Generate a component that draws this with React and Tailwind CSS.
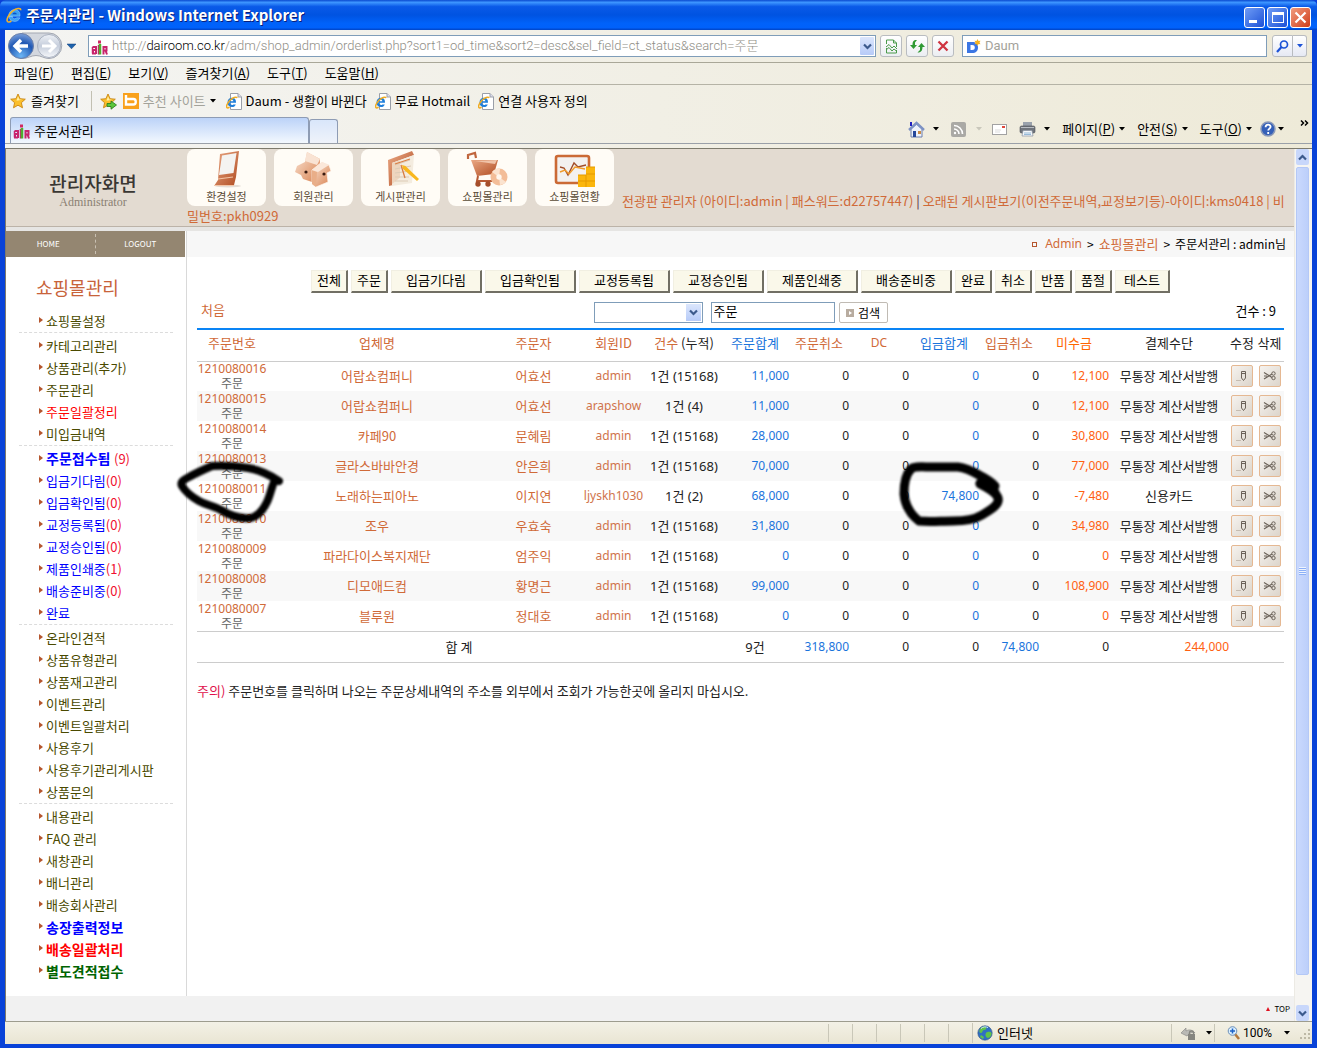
import React from "react";

const ORDERS = [
  ["1210080016", "어랍쇼컴퍼니", "어효선", "admin", "15168", "11,000", "0", "12,100"],
  ["1210080015", "어랍쇼컴퍼니", "어효선", "arapshow", "4", "11,000", "0", "12,100"],
  ["1210080014", "카페90", "문혜림", "admin", "15168", "28,000", "0", "30,800"],
  ["1210080013", "글라스바바안경", "안은희", "admin", "15168", "70,000", "0", "77,000"],
  ["1210080011", "노래하는피아노", "이지연", "ljyskh1030", "2", "68,000", "74,800", "-7,480", "신용카드"],
  ["1210080010", "조우", "우효숙", "admin", "15168", "31,800", "0", "34,980"],
  ["1210080009", "파라다이스복지재단", "엄주익", "admin", "15168", "0", "0", "0"],
  ["1210080008", "디모애드컴", "황명근", "admin", "15168", "99,000", "0", "108,900"],
  ["1210080007", "블루원", "정대호", "admin", "15168", "0", "0", "0"],
];

const MENU = [
  [["쇼핑몰설정"]],
  [["카테고리관리"], ["상품관리(추가)"], ["주문관리"], ["주문일괄정리", "text-[13px] text-[#f00]"], ["미입금내역"]],
  [
    ["주문접수됨", "text-[14px] text-[#00f] font-bold", "(9)"],
    ["입금기다림", "text-[13px] text-[#00f]", "(0)"],
    ["입금확인됨", "text-[13px] text-[#00f]", "(0)"],
    ["교정등록됨", "text-[13px] text-[#00f]", "(0)"],
    ["교정승인됨", "text-[13px] text-[#00f]", "(0)"],
    ["제품인쇄중", "text-[13px] text-[#00f]", "(1)"],
    ["배송준비중", "text-[13px] text-[#00f]", "(0)"],
    ["완료", "text-[13px] text-[#00f]"],
  ],
  [["온라인견적"], ["상품유형관리"], ["상품재고관리"], ["이벤트관리"], ["이벤트일괄처리"], ["사용후기"], ["사용후기관리게시판"], ["상품문의"]],
  [
    ["내용관리"],
    ["FAQ 관리"],
    ["새창관리"],
    ["배너관리"],
    ["배송회사관리"],
    ["송장출력정보", "text-[14px] text-[#00f] font-bold"],
    ["배송일괄처리", "text-[14px] text-[#f00] font-bold"],
    ["별도견적접수", "text-[14px] text-[#006400] font-bold"],
  ],
];

const STATUS_BUTTONS = [
  ["전체", "w-[37px]"],
  ["주문", "w-[37px]"],
  ["입금기다림", "w-[91px]"],
  ["입금확인됨", "w-[91px]"],
  ["교정등록됨", "w-[91px]"],
  ["교정승인됨", "w-[91px]"],
  ["제품인쇄중", "w-[91px]"],
  ["배송준비중", "w-[91px]"],
  ["완료", "w-[37px]"],
  ["취소", "w-[37px]"],
  ["반품", "w-[37px]"],
  ["품절", "w-[37px]"],
  ["테스트", "w-[55px]"],
];

const LATIN = "font-['Noto_Sans','Noto_Sans_CJK_KR',sans-serif]";
const NUM = "font-['Noto_Sans','Noto_Sans_CJK_KR',sans-serif] text-[12px]";

/* ---------- icons ---------- */

function IeLogo({ size = 16 }) {
  return (
    <svg width={size} height={size} viewBox="0 0 16 16" aria-hidden="true">
      <path d="M3.200 9.200h10.800c.5-4-2-6.600-5.400-6.600S2.800 5.200 2.800 8.500s2.400 5.900 5.800 5.900c2.600 0 4.500-1.200 5.300-3.600H10.500c-.4.700-1 1-1.900 1-1.300 0-2.200-.9-2.300-2.600z" fill="#3ba0f2" stroke="#bfe2ff" strokeWidth=".4" />
      <path d="M6.400 7.300h4.400c-.2-1.200-1-1.900-2.200-1.900s-2 .7-2.200 1.900z" fill="#0a52c8" />
      <path d="M14.800 3.200C14.600.6 10.500 1 6.500 4.200 2.500 7.500.2 12.500 1.400 14.400c.7 1.100 2.500.6 4-.4" fill="none" stroke="#f2b22c" strokeWidth="1.600" />
    </svg>
  );
}

function PageIe() {
  return (
    <svg width="16" height="17" viewBox="0 0 16 17" aria-hidden="true">
      <path d="M4.500.5h7.500l3.500 3.500v12.500h-11z" fill="#fff" stroke="#9a9fa8" />
      <path d="M12 .5V4h3.500" fill="#dde" stroke="#9a9fa8" />
      <path d="M2 9.800h8c.3-3.200-1.300-5.100-4-5.100S1.500 6.600 1.500 9.400 3.300 14 6 14c1.900 0 3.200-.9 3.800-2.600H7.300c-.3.500-.7.600-1.200.6-1 0-1.600-.7-1.700-1.700zM4.400 8.300c.1-.9.700-1.500 1.500-1.500s1.400.6 1.500 1.500z" fill="#1e7edb" fillRule="evenodd" />
      <path d="M11.200 5C10.200 3.200 6.500 4.700 4 7.300S-.3 13.500 1 14.700c.6.500 1.700 0 2.500-.6" fill="none" stroke="#f0ac22" strokeWidth="1.500" />
    </svg>
  );
}

function AirLogo() {
  return (
    <svg width="17" height="17" viewBox="0 0 17 17" fill="none" aria-hidden="true">
      <path d="M1.500 9h3.500v7M5 15.500H2v-3.500h3" stroke="#c8246c" strokeWidth="2" />
      <path d="M1.500 9v6.500" stroke="#c8246c" strokeWidth="1.500" />
      <path d="M7.500 7v9.500" stroke="#c8246c" strokeWidth="1.500" />
      <path d="M9 6v10.500" stroke="#4fae2f" strokeWidth="2.500" />
      <rect x="7" y="2.500" width="3" height="3" fill="#d02a62" />
      <path d="M12.500 16.500V9H15.500v3.500h-3M14.500 12.500l1.500 4" stroke="#c8246c" strokeWidth="2" />
    </svg>
  );
}

function Star({ add }) {
  return (
    <svg width="17" height="17" viewBox="0 0 17 17" aria-hidden="true">
      <path d="M8 1l2.100 4.700 5.200.5-3.900 3.500 1.100 5.100L8 12.200l-4.500 2.600 1.100-5.100L.7 6.200l5.200-.5z" fill="#fbbf2b" stroke="#c98612" strokeWidth=".9" />
      <path d="M8 3.200l1.300 3.200 3 .3-5.800 1z" fill="#fff0a8" />
      {add && <path d="M7 10.500h4V8l5.500 4L11 16.200v-2.700H7z" fill="#5bc63b" stroke="#237a1a" strokeWidth=".8" />}
    </svg>
  );
}

function Caret({ cls = "text-black" }) {
  return (
    <svg width="6" height="4" viewBox="0 0 6 4" className={`shrink-0 ${cls}`} aria-hidden="true">
      <path d="M0 0h6L3 3.500z" fill="currentColor" />
    </svg>
  );
}

function Chevron({ up }) {
  return (
    <svg width="9" height="7" viewBox="0 0 9 7" aria-hidden="true">
      <path d={up ? "M1 5.500l3.500-3.500L8 5.500" : "M1 1.500L4.500 5 8 1.500"} fill="none" stroke="#3c5a8c" strokeWidth="2.200" />
    </svg>
  );
}

function MenuIcon({ kind }) {
  return (
    <svg width="44" height="37" viewBox="0 0 44 37" aria-hidden="true">
      <defs>
        <linearGradient id="copper" x1="0" y1="0" x2="1" y2="1">
          <stop offset="0" stopColor="#eaa884" />
          <stop offset="1" stopColor="#b04c22" />
        </linearGradient>
        <linearGradient id="skin" x1="0" y1="0" x2="1" y2="1">
          <stop offset="0" stopColor="#fbe6d6" />
          <stop offset="1" stopColor="#d8814f" />
        </linearGradient>
      </defs>
      {kind === "monitor" && (
        <g>
          <ellipse cx="23" cy="35" rx="13" ry="1.500" fill="#e4ddd6" />
          <path d="M15 3L34 0l-3 26-2 8-20 1 4-6z" fill="url(#copper)" />
          <path d="M17 4.500L31.500 2l-3 20L14 24z" fill="#f4f3f1" />
          <path d="M13 28l15-2M9 34.500h20" stroke="#f3c6a8" strokeWidth="1.200" />
        </g>
      )}
      {kind === "people" && (
        <g>
          <path d="M15 1l13 7v11h-8v12l-9-3-2-4-6-3 2-6 8-4z" fill="url(#skin)" />
          <path d="M15 1l13 7-3 6-12-4z" fill="#f9e3d3" />
          <path d="M20 19l10-8 7 3 2 6-4 2 1 9-12 5-4-3z" fill="url(#skin)" stroke="#fff8f0" strokeWidth=".7" />
          <path d="M20 19l5 2-1 15-4-3z" fill="#e9ae88" />
          <path d="M20 19l10-8 7 3-11 7z" fill="#fbe8da" />
          <circle cx="14" cy="21" r="1.600" fill="#3a1b10" />
          <circle cx="32" cy="23" r="1.600" fill="#3a1b10" />
        </g>
      )}
      {kind === "board" && (
        <g>
          <path d="M9 9L33 0l2 4-22 8 1 22-4 1z" fill="url(#copper)" />
          <path d="M13 12l22-8-2 28-20 3z" fill="#f4ecdf" />
          <path d="M13 12l8-2.500v17L13 33z" fill="#e9c7a8" opacity=".6" />
          <path d="M16 14l15-5M16 18l16-3M16 22l15-2M16 26h14M16 30h13" stroke="#dccbb6" />
          <path d="M16 13l15-5M22 14l4 13" stroke="#d97d43" strokeWidth="1.300" />
          <path d="M23 14l3.500 1L40 28l-2 2-14-12z" fill="#f8b71e" />
        </g>
      )}
      {kind === "cart" && (
        <g>
          <path d="M2 8V4l7-2 1 5" fill="none" stroke="#c0653c" strokeWidth="2.200" />
          <path d="M5 9h27l-4 14-17 2z" fill="url(#copper)" />
          <path d="M9 10l22-1-2 4z" fill="#f0c3a8" />
          <path d="M12 25l-1 5h15" fill="none" stroke="#b75a34" strokeWidth="2" />
          <circle cx="12" cy="33" r="2.700" fill="#a54e2b" />
          <circle cx="22" cy="33" r="2.700" fill="#a54e2b" />
          <circle cx="33" cy="26" r="8.500" fill="#f3bd98" />
          <path d="M33 26l-7-5a8.500 8.500 0 0 1 8-3z" fill="#fbe3cf" />
          <path d="M33 26l7 5a8.500 8.500 0 0 1-6 3z" fill="#fbe3cf" />
          <circle cx="33" cy="26" r="2.700" fill="#fff7ee" />
        </g>
      )}
      {kind === "chart" && (
        <g>
          <rect x="3" y="5" width="33" height="27" rx="2" fill="#f3f1ef" stroke="#cb6a35" strokeWidth="2.600" />
          <path d="M7 16l4 1 4 7 6-12 4 4 8-2" fill="none" stroke="#a04c28" strokeWidth="1.400" />
          <path d="M7 21l5-2 4 4 6-7 10 2" fill="none" stroke="#f09a2a" strokeWidth="1.400" />
          <path d="M25 24h8v-8h9v20H25z" fill="#fbb60d" />
          <path d="M25 24h8M33 16h9M25 30h17M33 23h9M33 24v12" stroke="#e59a00" />
        </g>
      )}
    </svg>
  );
}

function HomeIcon() {
  return (
    <svg width="17" height="17" viewBox="0 0 17 17" aria-hidden="true">
      <path d="M3 8l5.500-5L14 8v8H3z" fill="#eef2fa" stroke="#6a7fae" />
      <path d="M1 9l7.500-7L16 9" fill="none" stroke="#7d92c4" strokeWidth="2.400" />
      <path d="M3 1v4" stroke="#2020c0" strokeWidth="2" />
      <path d="M5 10h3v6H5z" fill="#26489a" />
      <path d="M10 10h3v3h-3z" fill="#c98b45" />
    </svg>
  );
}

function PrinterIcon() {
  return (
    <svg width="17" height="16" viewBox="0 0 17 16" aria-hidden="true">
      <path d="M4 1h9v4H4z" fill="#9aa2ac" />
      <rect x="1" y="5" width="15" height="7" rx="1.500" fill="#70757c" stroke="#4b4f55" strokeWidth=".6" />
      <path d="M2 6.500h13" stroke="#b9bdc3" />
      <path d="M4 9.500h9l1 5.500H3z" fill="#f4f7fa" stroke="#8690a0" strokeWidth=".7" />
      <path d="M5 12h7M5 13.500h7" stroke="#7fa9cf" strokeWidth=".8" />
    </svg>
  );
}

function Globe() {
  return (
    <svg width="16" height="16" viewBox="0 0 16 16" aria-hidden="true">
      <circle cx="8" cy="8" r="7.200" fill="#2f6fc4" stroke="#31507c" strokeWidth=".6" />
      <path d="M3 4c2-3 5-3 6-2s0 3-2 3-1 3-3 3-2-2-1-4zM9 8c2-2 5-1 5.500 0s-1 5-3.500 5-3-4-2-5zM4 10l3 2-1 2-3-2z" fill="#5fc34a" />
      <path d="M4 3.500C6 1.500 9 1.500 11 2.500" stroke="#d7ecff" fill="none" />
    </svg>
  );
}

/* ---------- browser frame ---------- */

function TitleBar() {
  return (
    <header className="flex h-[30px] shrink-0 items-center rounded-t-md bg-[linear-gradient(180deg,#0a4ad0_0,#3d95ff_8%,#0a5ae8_22%,#0053e1_50%,#0062fa_78%,#0061fb_92%,#0043c4_100%)] pr-[6px] pl-[6px]">
      <IeLogo />
      <h1 className="ml-1 flex-1 text-[15px] font-bold text-white [text-shadow:1px_1px_0_#0a1f7a]">
        주문서관리 - Windows Internet Explorer
      </h1>
      <div className="mt-1 flex gap-[2px]">
        <button aria-label="최소화" className="flex size-[21px] items-end rounded-[3px] border border-white bg-linear-to-br from-[#6f9bf5] to-[#1d4fd6] p-1">
          <span className="h-[3px] w-[8px] bg-white" />
        </button>
        <button aria-label="최대화" className="flex size-[21px] items-center justify-center rounded-[3px] border border-white bg-linear-to-br from-[#6f9bf5] to-[#1d4fd6]">
          <span className="h-[11px] w-[12px] border border-t-[3px] border-white" />
        </button>
        <button aria-label="닫기" className="flex size-[21px] items-center justify-center rounded-[3px] border border-white bg-linear-to-br from-[#f09a7c] to-[#cf3a12]">
          <svg width="13" height="13" viewBox="0 0 13 13" aria-hidden="true">
            <path d="M1.500 1.500l10 10M11.500 1.500l-10 10" stroke="#fff" strokeWidth="2.200" />
          </svg>
        </button>
      </div>
    </header>
  );
}

function SquareButton({ label, children }) {
  return (
    <button aria-label={label} className="flex size-[22px] items-center justify-center rounded-[3px] border border-[#b9bcc0] bg-linear-to-b from-white to-[#eceef2]">
      {children}
    </button>
  );
}

function AddressBar() {
  return (
    <div className="flex h-[33px] shrink-0 items-center border-b border-[#a9a798] bg-linear-to-r from-[#f4f4f2] to-[#eeead8] pr-[5px] pl-[2px]">
      <svg width="56" height="28" viewBox="0 0 56 28" role="img" aria-label="뒤로 앞으로">
        <defs>
          <radialGradient id="back" cx=".5" cy=".9" r=".9">
            <stop offset="0" stopColor="#6cb5f4" />
            <stop offset=".6" stopColor="#2058b4" />
            <stop offset="1" stopColor="#7aa0dc" />
          </radialGradient>
          <linearGradient id="fwd" x1="0" y1="0" x2="0" y2="1">
            <stop offset="0" stopColor="#eef1f6" />
            <stop offset=".5" stopColor="#c5cddb" />
            <stop offset="1" stopColor="#f6f8fb" />
          </linearGradient>
        </defs>
        <path d="M15 1h27a12.500 12.500 0 0 1 0 25.500c-5 0-8-3-13-3s-8 3-14 3z" fill="#d3d7de" stroke="#a3a8b2" />
        <circle cx="14" cy="14" r="12.500" fill="url(#back)" stroke="#6a7ea8" />
        <circle cx="42" cy="14" r="11.500" fill="url(#fwd)" stroke="#a9b1c0" />
        <path d="M14 8l-6 6 6 6M8 14h13" fill="none" stroke="#fff" strokeWidth="3.400" />
        <path d="M42 8l6 6-6 6M48 14H35" fill="none" stroke="#fff" strokeWidth="3" />
      </svg>
      <button aria-label="최근 페이지" className="mr-2 ml-1">
        <svg width="9" height="6" viewBox="0 0 9 6" aria-hidden="true">
          <path d="M0 1h9L4.500 5.800z" fill="#1d63ad" stroke="#123f78" strokeWidth=".5" />
        </svg>
      </button>
      <div className="ml-1 flex h-[22px] min-w-0 flex-1 items-center border border-[#7f9db9] bg-white pl-[2px]">
        <AirLogo />
        <a href="#address" className="ml-1 min-w-0 flex-1 truncate font-[Roboto,'Noto_Sans_CJK_KR',sans-serif] text-[13px] leading-5 font-light text-[#8f8e86]">
          http://<span className="text-black">dairoom.co.kr</span>/adm/shop_admin/orderlist.php?sort1=od_time&amp;sort2=desc&amp;sel_field=ct_status&amp;search=주문
        </a>
        <button aria-label="주소 목록" className="mr-px flex h-[18px] w-[14px] items-center justify-center rounded-[1px] bg-linear-to-b from-[#dbe6fc] to-[#b7cbf8]">
          <Chevron />
        </button>
      </div>
      <div className="ml-1 flex gap-1">
        <SquareButton label="호환성 보기">
          <svg width="13" height="15" viewBox="0 0 13 15" fill="none" stroke="#4a9a4a" aria-hidden="true">
            <path d="M1.500 5V1h7l3 3v4M8.500 1v3h3M1.500 9v5h10v-3M1 8l3-2.500L7 9l2-2 3 3M1 11l3-2.500 3 3.500 2-2 3 2.500" />
          </svg>
        </SquareButton>
        <SquareButton label="새로 고침">
          <svg width="15" height="14" viewBox="0 0 15 14" aria-hidden="true">
            <path d="M0 6l3.500 4L7 6H5V3.500L7 1H5C3 2 2.500 3 2.500 6z" fill="#2f9a34" />
            <path d="M8 8l3.500-4L15 8h-2.500c0 3-1 5-3.500 5.500H7.500L10 11V8z" fill="#2f9a34" />
          </svg>
        </SquareButton>
        <SquareButton label="중지">
          <svg width="12" height="12" viewBox="0 0 12 12" aria-hidden="true">
            <path d="M1.500 1.500l9 9M10.500 1.500l-9 9" stroke="#cf3340" strokeWidth="2.300" />
          </svg>
        </SquareButton>
      </div>
      <label className="ml-2 flex h-[22px] w-[305px] items-center border border-[#7f9db9] bg-white pl-[3px]">
        <svg width="15" height="15" viewBox="0 0 15 15" aria-hidden="true">
          <path d="M1 3h5c4 0 6 2 6 5.500S10 14 6 14H1zm3.500 3v5H6c2 0 2.800-.8 2.800-2.500S8 6 6 6z" fill="#3b76e4" fillRule="evenodd" />
          <path d="M11.500 0l1 2 2-.3-1 1.800 1 1.800-2-.3-1 2-1-2-2 .3 1-1.800-1-1.800 2 .3z" fill="#f6b321" />
        </svg>
        <input aria-label="검색" placeholder="Daum" className="ml-1 min-w-0 flex-1 font-[Roboto,'Noto_Sans_CJK_KR',sans-serif] text-[13px] outline-none placeholder:text-[#a3a29a]" />
      </label>
      <div className="ml-[5px] flex">
        <button aria-label="검색 실행" className="flex h-[22px] w-[21px] items-center justify-center rounded-l-[3px] border border-[#b9bcc0] bg-linear-to-b from-white to-[#e6e9f4]">
          <svg width="13" height="13" viewBox="0 0 13 13" fill="none" stroke="#1c52d6" aria-hidden="true">
            <circle cx="8" cy="4.500" r="3.500" strokeWidth="1.700" />
            <path d="M5.500 7L1 12" strokeWidth="2.200" />
          </svg>
        </button>
        <button aria-label="검색 공급자" className="flex h-[22px] w-[14px] items-center justify-center rounded-r-[3px] border border-l-0 border-[#b9bcc0] bg-linear-to-b from-white to-[#e6e9f4]">
          <Caret cls="text-[#1c52d6]" />
        </button>
      </div>
    </div>
  );
}

function MenuBar() {
  const items = [["파일", "F"], ["편집", "E"], ["보기", "V"], ["즐겨찾기", "A"], ["도구", "T"], ["도움말", "H"]];
  return (
    <nav className="flex h-[22px] shrink-0 items-center gap-[17px] border-b border-[#b5b3a6] bg-linear-to-r from-[#f4f4f2] to-[#eeead8] pb-[2px] pl-[9px]">
      {items.map(([t, k]) => (
        <button key={k} className="text-[13px] leading-5">
          {t}(<u>{k}</u>)
        </button>
      ))}
    </nav>
  );
}

function Favorites() {
  return (
    <div className="flex h-8 shrink-0 items-center pl-[5px] text-[13px] leading-5">
      <button className="flex items-center gap-1"><Star />즐겨찾기</button>
      <span className="mr-2 ml-3 h-5 w-px bg-[#c2c0b2]" />
      <button aria-label="즐겨찾기에 추가"><Star add /></button>
      <button className="ml-[6px] flex items-center gap-1 text-[#a3a29a]">
        <svg width="16" height="16" viewBox="0 0 16 16" aria-hidden="true">
          <rect width="16" height="16" fill="#f9a11b" />
          <path d="M3 2v9.500h7.500c3 0 3-5.500 0-5.500H4" fill="none" stroke="#fff" strokeWidth="2.400" />
        </svg>
        추천 사이트
        <Caret />
      </button>
      <a href="#daum" className="ml-[10px] flex items-center gap-1"><PageIe />Daum - 생활이 바뀐다</a>
      <a href="#hotmail" className="ml-2 flex items-center gap-1"><PageIe />무료 Hotmail</a>
      <a href="#links" className="ml-2 flex items-center gap-1"><PageIe />연결 사용자 정의</a>
    </div>
  );
}

function TabRow() {
  return (
    <div className="flex h-[27px] shrink-0 items-end border-b border-[#9aa0a8] pl-[5px] text-[13px]">
      <button className="flex h-[26px] w-[299px] items-center gap-1 rounded-t-[3px] border border-b-0 border-[#8e9cb4] bg-linear-to-b from-[#bcd3f8] to-[#f3f8fe] pl-[2px]">
        <AirLogo />주문서관리
      </button>
      <button aria-label="새 탭" className="h-[24px] w-[29px] rounded-t-[3px] border border-b-0 border-[#8e9cb4] bg-linear-to-b from-[#d9e6fa] to-[#eff3fa]" />
      <div className="mb-1 ml-auto flex items-center pr-[3px] leading-5">
        <button aria-label="홈" className="flex items-center gap-2"><HomeIcon /><Caret /></button>
        <button aria-label="피드" className="ml-3 flex items-center gap-[10px]">
          <svg width="15" height="15" viewBox="0 0 15 15" aria-hidden="true">
            <rect width="15" height="15" rx="2" fill="#aaa9a5" />
            <path d="M3 7a5 5 0 0 1 5 5M3 3.500A8.500 8.500 0 0 1 11.500 12" fill="none" stroke="#fff" strokeWidth="1.600" />
            <circle cx="4" cy="11" r="1.200" fill="#fff" />
          </svg>
          <Caret cls="text-[#c9c7bb]" />
        </button>
        <button aria-label="메일" className="ml-[10px]">
          <svg width="15" height="11" viewBox="0 0 15 11" aria-hidden="true">
            <rect x=".5" y=".5" width="14" height="10" fill="#fff" stroke="#a2a2a2" />
            <path d="M10 2h3v2h-3z" fill="#e0483a" />
            <path d="M3 6h6M3 8h5" stroke="#ddd" />
          </svg>
        </button>
        <button aria-label="인쇄" className="ml-3 flex items-center gap-2"><PrinterIcon /><Caret /></button>
        <button className="ml-3 flex items-center gap-1"><span>페이지(<u>P</u>)</span><Caret /></button>
        <button className="ml-3 flex items-center gap-1"><span>안전(<u>S</u>)</span><Caret /></button>
        <button className="ml-3 flex items-center gap-1"><span>도구(<u>O</u>)</span><Caret /></button>
        <button aria-label="도움말" className="ml-2 flex items-center gap-[2px]">
          <svg width="16" height="16" viewBox="0 0 16 16" aria-hidden="true">
            <circle cx="8" cy="8" r="7" fill="#3560b8" stroke="#8c9ab8" strokeWidth="1.500" />
            <path d="M5.600 6.200c0-3.400 5-3.200 5-.4 0 1.800-2.400 1.800-2.400 3.700M8.200 11v2" stroke="#fff" strokeWidth="1.800" fill="none" />
          </svg>
          <Caret />
        </button>
        <button aria-label="더 보기" className="mb-3 ml-4">
          <svg width="9" height="6" viewBox="0 0 9 6" fill="none" stroke="#000" strokeWidth="1.500" aria-hidden="true">
            <path d="M1 .5L3.500 3 1 5.500M5 .5L7.500 3 5 5.500" />
          </svg>
        </button>
      </div>
    </div>
  );
}

/* ---------- page ---------- */

function PageHeader() {
  const cards = [["환경설정", "monitor"], ["회원관리", "people"], ["게시판관리", "board"], ["쇼핑몰관리", "cart"], ["쇼핑몰현황", "chart"]];
  return (
    <header className="flex h-[82px] border-b-4 border-[#e6e5e3] bg-[#e3dbd1] shadow-[inset_0_-1px_0_#bcb3a8]">
      <div className="flex w-[181px] shrink-0 flex-col items-center pt-5 pr-[7px]">
        <strong className="text-[19px] leading-7 font-medium text-[#3a3733]">관리자화면</strong>
        <span className="font-['Liberation_Serif',serif] text-[12px] leading-[10px] text-[#8a7f72]">Administrator</span>
      </div>
      <div className="min-w-0 flex-1 text-[#d06a38]">
        <div className="flex items-end">
          <nav className="flex gap-2">
            {cards.map(([label, kind]) => (
              <a key={kind} href={`#${kind}`} className="flex h-[57px] w-[79px] flex-col items-center rounded-lg bg-[#fffcf6] pt-[2px] text-[11px] leading-4 text-[#5a4b36]">
                <MenuIcon kind={kind} />
                {label}
              </a>
            ))}
          </nav>
          <p className="-mb-[5px] ml-2 text-[13px] leading-5 whitespace-nowrap">
            <a href="#board">전광판 관리자 (아이디:admin | 패스워드:d22757447)</a>
            <span className="text-[#551a3b]"> | </span>
            <a href="#old">오래된 게시판보기(이전주문내역,교정보기등)-아이디:kms0418 | 비</a>
          </p>
        </div>
        <a href="#old" className="block text-[13px] leading-5">밀번호:pkh0929</a>
      </div>
    </header>
  );
}

function Sidebar() {
  return (
    <aside className="w-[181px] shrink-0 border-r border-[#d9d9d9] bg-white">
      <div className="mr-px flex h-[26px] items-center bg-[#948671] text-[8px] leading-3 text-white">
        <a href="#home" className="w-1/2 border-r border-dashed border-[#c9c0b2] py-1 pr-1 text-center">HOME</a>
        <a href="#logout" className="w-1/2 text-center">LOGOUT</a>
      </div>
      <h2 className="mt-4 pl-[30px] text-[18px] leading-7 text-[#c8633a]">쇼핑몰관리</h2>
      <nav className="mt-2 pr-[13px] pl-[13px]">
        {MENU.map((group, i) => (
          <ul key={i} className="mb-px border-dashed border-[#dcdcdc] pb-px not-last:border-b">
            {group.map(([label, cls = "text-[13px] text-[#4a4a00]", count]) => (
              <li key={label} className="flex h-[22px] items-center pl-5 leading-5">
                <svg width="4" height="6" viewBox="0 0 4 6" className="mr-[3px]" aria-hidden="true">
                  <path d="M0 0l4 3-4 3z" fill="#b5562e" />
                </svg>
                <a href={`#${label}`}>
                  <span className={cls}>{label}</span>
                  {i === 2 && cls.includes("bold") && " "}
                  {count && <span className="text-[13px] text-[#f01030]">{count}</span>}
                </a>
              </li>
            ))}
          </ul>
        ))}
      </nav>
    </aside>
  );
}

function RowButton({ label, children }) {
  return (
    <button aria-label={label} className="flex size-[22px] items-center justify-center rounded-[2px] border border-[#e5b892] bg-linear-to-br from-[#f6f3ef] to-[#dcd5cb]">
      {children}
    </button>
  );
}

function OrderTable() {
  const cellR = `text-right ${NUM}`;
  return (
    <div className="relative mr-[10px] ml-[10px]">
      <table className="w-full table-fixed border-collapse text-[13px] leading-5 text-[#222]">
        <colgroup>
          <col className="w-[70px]" />
          <col />
          <col className="w-[93px]" />
          <col className="w-[67px]" />
          <col className="w-[74px]" />
          <col className="w-[68px]" />
          <col className="w-[60px]" />
          <col className="w-[60px]" />
          <col className="w-[70px]" />
          <col className="w-[60px]" />
          <col className="w-[70px]" />
          <col className="w-[120px]" />
          <col className="w-[26px]" />
          <col className="w-[29px]" />
        </colgroup>
        <thead>
          <tr className="h-8 border-t-2 border-b border-t-[#0a84f5] border-b-[#ccc] whitespace-nowrap text-[#d06a38] [&>th]:p-0 [&>th]:pb-1 [&>th]:font-normal">
            <th>주문번호</th>
            <th>업체명</th>
            <th>주문자</th>
            <th>회원ID</th>
            <th>건수 <span className="text-[#222]">(누적)</span></th>
            <th className="text-[#1a74dc]">주문합계</th>
            <th>주문취소</th>
            <th className={NUM}>DC</th>
            <th className="text-[#1a74dc]">입금합계</th>
            <th>입금취소</th>
            <th className="text-[#ff6600]">미수금</th>
            <th className="text-[#222]">결제수단</th>
            <th className="text-[#222]">수정</th>
            <th className="text-[#222]">삭제</th>
          </tr>
        </thead>
        <tbody>
          {ORDERS.map(([no, company, person, id, cum, total, paid, due, pay = "무통장 계산서발행"]) => (
            <tr key={no} className="h-[30px] text-center whitespace-nowrap even:bg-[#f8f8f8] [&>td]:p-0">
              <td>
                <a href={`#${no}`} className={`block leading-[14px] text-[#d06a38] ${NUM}`}>{no}</a>
                <span className="block text-[12px] leading-[14px] text-[#666]">주문</span>
              </td>
              <td><a href="#company" className="text-[#d06a38]">{company}</a></td>
              <td><a href="#person" className="text-[#d06a38]">{person}</a></td>
              <td className={NUM}><a href="#member" className="text-[#d0744c]">{id}</a></td>
              <td className={LATIN}>1건 ({cum})</td>
              <td className={`text-[#1a74dc] ${cellR}`}>{total}</td>
              <td className={cellR}>0</td>
              <td className={cellR}>0</td>
              <td className={`text-[#1a74dc] ${cellR}`}>{paid}</td>
              <td className={cellR}>0</td>
              <td className={`text-[#ff6010] ${cellR}`}>{due}</td>
              <td>{pay}</td>
              <td>
                <div className="flex justify-center">
                  <RowButton label="수정">
                    <svg width="14" height="12" viewBox="0 0 14 12" fill="none" stroke="#6b6259" aria-hidden="true">
                      <path d="M6.500 1.500h4V8l-2 2.500-2-2.500zM6.500 3.500h4" />
                      <path d="M1 10.500h5" stroke="#c5bcb0" />
                    </svg>
                  </RowButton>
                </div>
              </td>
              <td>
                <div className="flex justify-center">
                  <RowButton label="삭제">
                    <svg width="13" height="10" viewBox="0 0 13 10" fill="none" stroke="#6b6259" aria-hidden="true">
                      <path d="M1 1.500l8 5M1 8l8-5M1 5h3" strokeWidth="1.200" />
                      <circle cx="10.500" cy="2.500" r="1.700" />
                      <circle cx="10.500" cy="7" r="1.700" />
                    </svg>
                  </RowButton>
                </div>
              </td>
            </tr>
          ))}
        </tbody>
        <tfoot>
          <tr className="h-[31px] border-y border-[#ccc] text-center [&>td]:p-0">
            <td colSpan={5}>합 계</td>
            <td className={LATIN}>9건</td>
            <td className={`text-[#1a74dc] ${cellR}`}>318,800</td>
            <td className={cellR}>0</td>
            <td className={cellR}>0</td>
            <td className={`text-[#1a74dc] ${cellR}`}>74,800</td>
            <td className={cellR}>0</td>
            <td className={`text-[#ff6010] ${cellR}`}>244,000</td>
            <td colSpan={2} />
          </tr>
        </tfoot>
      </table>
      <svg width="108" height="66" viewBox="176 460 108 66" className="pointer-events-none absolute top-[132px] -left-[21px] blur-[1px]" aria-hidden="true">
        <path d="M279 481c-9-6-19-11-31-13-13-2-24-3-36-2-7 3-14 6-23 11-6 3-9 5-7 9 3 5 10 11 17 15 7 4 15 5 22 9 8 5 17 9 29 8 8-1 13-8 17-16 3-6 4-13 7-20" fill="none" stroke="#000" strokeWidth="8" strokeLinecap="round" strokeLinejoin="round" />
      </svg>
      <svg width="108" height="66" viewBox="895 460 108 66" className="pointer-events-none absolute top-[132px] right-[281px] blur-[1px]" aria-hidden="true">
        <path d="M980 484c8 4 16 8 18 14 2 7-8 12-16 17-8 5-19 6-29 6-12 0-24 1-34 0-9-7-14-16-15-27 0-9 1-19 7-25 3-3 12-2 20-2h27c8 1 14 4 21 8 8 4 13 7 16 11" fill="none" stroke="#000" strokeWidth="9" strokeLinecap="round" strokeLinejoin="round" />
        <path d="M980 483l15 9" stroke="#000" strokeWidth="9" strokeLinecap="round" />
      </svg>
    </div>
  );
}

function Content() {
  return (
    <main className="min-w-0 flex-1 bg-white">
      <div className="flex h-[26px] items-center justify-end bg-[#f7f7f7] pr-2 text-[13px] leading-5">
        <span className="mr-2 size-[5px] border border-[#b5562e]" />
        <a href="#admin" className={`text-[#d06a38] ${NUM}`}>Admin</a>
        <span className="mx-[5px] text-[12px]">&gt;</span>
        <a href="#shop" className="text-[#d06a38]">쇼핑몰관리</a>
        <span className="mx-[5px] text-[12px]">&gt;</span>
        <span className="text-[12px]">주문서관리 : admin님</span>
      </div>
      <div className="mt-[13px] flex justify-center gap-[3px]">
        {STATUS_BUTTONS.map(([label, w]) => (
          <button key={label} className={`h-[23px] ${w} border-r-2 border-b-2 border-t border-l border-t-[#f1efe2] border-l-[#f1efe2] border-r-[#716f64] border-b-[#716f64] bg-[#faf8ea] pb-[2px] text-[13px] leading-4 whitespace-nowrap`}>
            {label}
          </button>
        ))}
      </div>
      <form className="mt-[9px] grid h-[26px] grid-cols-[1fr_auto_1fr] text-[13px] leading-4" onSubmit={(e) => e.preventDefault()}>
        <a href="#first" className="pl-[14px] text-[#d06a38]">처음</a>
        <div className="flex h-[21px] items-stretch">
          <label className="relative flex">
            <select aria-label="검색 항목" className="w-[109px] appearance-none border border-[#7f9db9] bg-white">
              <option></option>
            </select>
            <span className="pointer-events-none absolute inset-y-[2px] right-[2px] flex w-[15px] items-center justify-center bg-linear-to-b from-[#dbe6fc] to-[#b7cbf8]">
              <Chevron />
            </span>
          </label>
          <input aria-label="검색어" defaultValue="주문" className="ml-2 w-[124px] border border-[#7f9db9] px-[2px] pb-1 outline-none" />
          <button className="ml-1 flex w-[49px] items-center justify-center gap-1 rounded-[2px] border border-[#c0bbb4] text-[12px]">
            <svg width="8" height="8" viewBox="0 0 8 8" aria-hidden="true">
              <rect width="8" height="8" fill="#b8aca0" />
              <path d="M3 2l3 2-3 2z" fill="#fff" />
            </svg>
            검색
          </button>
        </div>
        <span className="pt-px pr-[18px] text-right">건수 : 9</span>
      </form>
      <OrderTable />
      <p className="mt-[18px] ml-[10px] text-[13px] leading-5 text-[#222]">
        <span className="text-[#e0104c]">주의)</span> 주문번호를 클릭하며 나오는 주문상세내역의 주소를 외부에서 조회가 가능한곳에 올리지 마십시오.
      </p>
    </main>
  );
}

function ScrollBar() {
  return (
    <div className="flex w-[18px] shrink-0 flex-col border-l border-[#eceae4] bg-[#f6f5f2] pr-[3px] pl-px" aria-hidden="true">
      <span className="flex h-4 items-center justify-center rounded-[2px] bg-[#c8d7fb]"><Chevron up /></span>
      <span className="mt-[2px] mb-[30px] flex flex-1 items-center justify-center rounded-[2px] border border-[#b4c8f6] bg-linear-to-r from-[#cad9fd] to-[#bccffa]">
        <span className="h-2 w-[7px] bg-[repeating-linear-gradient(180deg,#eef4fe_0_1px,#8cb0f8_1px_2px)]" />
      </span>
      <span className="flex h-4 items-center justify-center rounded-[2px] bg-[#c8d7fb]"><Chevron /></span>
    </div>
  );
}

function StatusBar() {
  return (
    <footer className="flex h-[23px] shrink-0 items-center border-t border-[#9d9c8e] bg-linear-to-b from-[#f3f1e6] to-[#e9e5d3] text-[13px] leading-5">
      <div className="ml-auto flex items-center">
        {[0, 1, 2, 3, 4, 5].map((n) => (
          <span key={n} className="h-[18px] w-6 border-l border-[#c9c7b8]" />
        ))}
        <div className="flex w-[199px] items-center gap-1 border-l border-[#c9c7b8] pl-1">
          <Globe />인터넷
        </div>
        <button aria-label="보호 모드" className="flex h-[18px] w-[43px] items-center gap-2 border-l border-[#c9c7b8] pl-2">
          <svg width="18" height="15" viewBox="0 0 18 15" aria-hidden="true">
            <path d="M1 7l5-5v3c3-2 7-1 9 2-3-1-6 0-8 3z" fill="#b9b9b5" stroke="#8d8d8a" strokeWidth=".7" />
            <rect x="8" y="8" width="7" height="6" fill="#85857f" />
            <path d="M9.500 8V6.500c0-2 4-2 4 0V8" fill="none" stroke="#85857f" strokeWidth="1.300" />
          </svg>
          <Caret />
        </button>
        <button className="flex h-[18px] w-[76px] items-center gap-[3px] border-l border-[#c9c7b8] pl-3">
          <svg width="13" height="14" viewBox="0 0 13 14" aria-hidden="true">
            <path d="M8 8l4 5" stroke="#b5793c" strokeWidth="2.500" />
            <circle cx="5.500" cy="5" r="4.300" fill="#d9eeff" stroke="#6c8fb8" />
            <path d="M5.500 2.500v5M3 5h5" stroke="#1c62c8" strokeWidth="1.500" />
          </svg>
          <span className="font-[Roboto,sans-serif] text-[12px]">100%</span>
          <Caret cls="ml-auto text-black" />
        </button>
        <svg width="16" height="16" viewBox="0 0 16 16" fill="#bdb9a6" className="ml-[6px]" aria-hidden="true">
          <path d="M12 4h2v2h-2zM12 8h2v2h-2zM12 12h2v2h-2zM8 8h2v2H8zM8 12h2v2H8zM4 12h2v2H4z" />
        </svg>
      </div>
    </footer>
  );
}

export default function App() {
  return (
    <div className="flex min-h-screen w-full flex-col bg-[#0a3fd8] font-['Noto_Sans_CJK_KR','Noto_Sans',sans-serif] text-black">
      <TitleBar />
      <div className="flex flex-1 flex-col border-r-[5px] border-b-4 border-l-[5px] border-[#0842d8] bg-linear-to-r from-[#f4f4f2] to-[#eeead8]">
        <AddressBar />
        <MenuBar />
        <Favorites />
        <TabRow />
        <div className="mt-1 flex flex-1 border-t border-l border-[#7d7a6c] bg-white">
          <div className="flex min-w-0 flex-1 flex-col">
            <PageHeader />
            <div className="flex flex-1">
              <Sidebar />
              <Content />
            </div>
            <div className="flex h-[25px] items-center justify-end gap-1 bg-[#f1f1f1] pr-1 text-[8px]">
              <svg width="4" height="4" viewBox="0 0 4 4" aria-hidden="true"><path d="M2 0l2 4H0z" fill="#e01020" /></svg>
              <a href="#top">TOP</a>
            </div>
          </div>
          <ScrollBar />
        </div>
        <StatusBar />
      </div>
    </div>
  );
}
